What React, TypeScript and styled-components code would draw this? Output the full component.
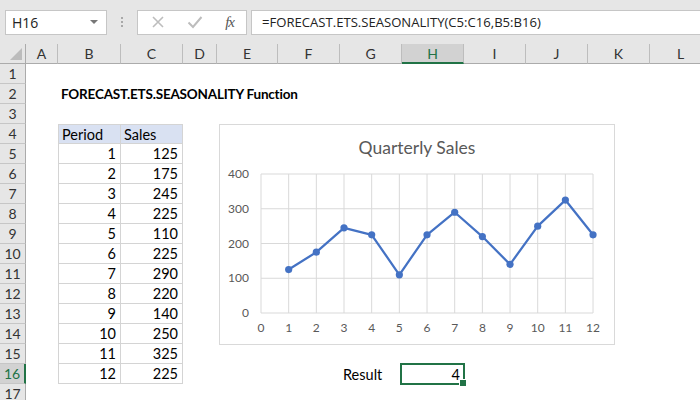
import React from 'react';
import styled, { createGlobalStyle } from 'styled-components';

const GlobalStyle = createGlobalStyle`
  html, body {
    margin: 0;
    padding: 0;
    background: #ffffff;
  }
  * {
    box-sizing: border-box;
  }
`;

const GREEN = '#217346';
const UI_FONT = `'Open Sans', 'Noto Sans', sans-serif`;
const CELL_FONT = `Lato, 'Liberation Sans', sans-serif`;

const COLUMNS: { key: string; width: number }[] = [
  { key: 'A', width: 32 },
  { key: 'B', width: 63 },
  { key: 'C', width: 62 },
  { key: 'D', width: 34 },
  { key: 'E', width: 61 },
  { key: 'F', width: 62 },
  { key: 'G', width: 62 },
  { key: 'H', width: 62 },
  { key: 'I', width: 62 },
  { key: 'J', width: 62 },
  { key: 'K', width: 62 },
  { key: 'L', width: 62 },
];

const ROW_COUNT = 17;
const SELECTED_COL = 'H';
const SELECTED_ROW = 16;

const SALES = [125, 175, 245, 225, 110, 225, 290, 220, 140, 250, 325, 225];

type CellDef = {
  value: string;
  align?: 'left' | 'right';
  bold?: boolean;
  header?: boolean;
  table?: boolean;
};

const buildCells = () => {
  const cells: Record<string, CellDef> = {
    B2: { value: 'FORECAST.ETS.SEASONALITY Function', bold: true },
    B4: { value: 'Period', header: true, table: true },
    C4: { value: 'Sales', header: true, table: true },
    G16: { value: 'Result' },
    H16: { value: '4', align: 'right' },
  };
  SALES.forEach((s, i) => {
    cells[`B${i + 5}`] = { value: String(i + 1), align: 'right', table: true };
    cells[`C${i + 5}`] = { value: String(s), align: 'right', table: true };
  });
  return cells;
};

const CELLS = buildCells();

const Window = styled.div`
  width: 700px;
  height: 400px;
  overflow: hidden;
  background: #ffffff;
  display: flex;
  flex-direction: column;
`;

const FormulaBar = styled.div`
  height: 44px;
  flex: none;
  display: flex;
  align-items: center;
  padding-left: 5px;
  background: #e6e6e6;
`;

const NameBox = styled.div`
  width: 102px;
  height: 25px;
  background: #ffffff;
  border: 1px solid #c6c6c6;
  display: flex;
  align-items: center;
  justify-content: space-between;
  padding: 0 8px 0 6px;
  font-family: ${UI_FONT};
  font-size: 14px;
  color: #222;
`;

const DropArrow = styled.span`
  width: 0;
  height: 0;
  border-left: 4px solid transparent;
  border-right: 4px solid transparent;
  border-top: 4px solid #777;
`;

const Grip = styled.div`
  width: 30px;
  display: flex;
  flex-direction: column;
  align-items: center;
  gap: 2px;
`;

const GripDot = styled.span`
  width: 2px;
  height: 2px;
  background: #a8a8a8;
`;

const IconBox = styled.div`
  width: 110px;
  height: 25px;
  background: #ffffff;
  border: 1px solid #c6c6c6;
  display: flex;
  align-items: center;
  justify-content: space-between;
  padding: 0 12px 0 13px;
`;

const FxLabel = styled.span`
  font-family: 'Liberation Serif', serif;
  font-style: italic;
  font-size: 15px;
  color: #555;
  letter-spacing: -1px;
`;

const FormulaInput = styled.div`
  flex: 1;
  height: 25px;
  margin-left: 4px;
  background: #ffffff;
  border: 1px solid #c6c6c6;
  border-right: none;
  display: flex;
  align-items: center;
  padding-left: 10px;
  font-family: ${UI_FONT};
  font-size: 13.1px;
  color: #222;
  white-space: nowrap;
`;

const SheetArea = styled.div`
  position: relative;
  flex: 1;
  overflow: hidden;
`;

const Grid = styled.div`
  display: grid;
  grid-template-columns: 26px ${COLUMNS.map((c) => `${c.width}px`).join(' ')};
  grid-auto-rows: 20px;
`;

const Corner = styled.div`
  background: #e6e6e6;
  border-right: 1px solid #ababab;
  border-bottom: 1px solid #ababab;
  display: flex;
  align-items: flex-end;
  justify-content: flex-end;
  padding: 0 3px 3px 0;
`;

const ColHeader = styled.div<{ $selected: boolean }>`
  background: ${(p) => (p.$selected ? '#d2d2d2' : '#e6e6e6')};
  border-right: 1px solid #bdbdbd;
  border-bottom: ${(p) => (p.$selected ? `2px solid ${GREEN}` : '1px solid #ababab')};
  display: flex;
  align-items: center;
  justify-content: center;
  font-family: ${CELL_FONT};
  font-size: 14px;
  color: ${(p) => (p.$selected ? GREEN : '#333')};
  padding-top: ${(p) => (p.$selected ? '1px' : '0')};
`;

const RowHeader = styled.div<{ $selected: boolean }>`
  background: ${(p) => (p.$selected ? '#d2d2d2' : '#e6e6e6')};
  border-right: ${(p) => (p.$selected ? `2px solid ${GREEN}` : '1px solid #ababab')};
  border-bottom: 1px solid #c6c6c6;
  display: flex;
  align-items: center;
  justify-content: center;
  font-family: ${CELL_FONT};
  font-size: 14px;
  color: ${(p) => (p.$selected ? GREEN : '#333')};
`;

const Cell = styled.div<{
  $align: 'left' | 'right';
  $bold: boolean;
  $header: boolean;
  $table: boolean;
  $firstCol: boolean;
  $firstRow: boolean;
  $selected: boolean;
}>`
  position: relative;
  display: flex;
  align-items: center;
  justify-content: ${(p) => (p.$align === 'right' ? 'flex-end' : 'flex-start')};
  padding: 0 4px 0 3px;
  white-space: nowrap;
  overflow: visible;
  font-family: ${CELL_FONT};
  font-size: ${(p) => (p.$bold ? '13.5px' : '14.5px')};
  letter-spacing: ${(p) => (p.$bold ? '-0.2px' : '0')};
  font-weight: ${(p) => (p.$bold ? 700 : 400)};
  color: #000;
  background: ${(p) => (p.$header ? '#d9e1f2' : 'transparent')};
  border-right: ${(p) => (p.$table ? '1px solid #d4d4d4' : 'none')};
  border-bottom: ${(p) => (p.$table ? '1px solid #d4d4d4' : 'none')};
  border-left: ${(p) => (p.$table && p.$firstCol ? '1px solid #d4d4d4' : 'none')};
  border-top: ${(p) => (p.$table && p.$firstRow ? '1px solid #d4d4d4' : 'none')};

  ${(p) =>
    p.$selected &&
    `
    &::before {
      content: '';
      position: absolute;
      left: -2px;
      top: -1px;
      right: -1px;
      bottom: -1px;
      border: 2px solid ${GREEN};
    }
    &::after {
      content: '';
      position: absolute;
      right: -3px;
      bottom: -3px;
      width: 6px;
      height: 6px;
      background: ${GREEN};
      border: 1px solid #ffffff;
    }
  `}
`;

const ChartBox = styled.div`
  position: absolute;
  left: 219px;
  top: 80px;
  width: 396px;
  height: 221px;
  background: #ffffff;
  border: 1px solid #d9d9d9;
  display: flex;
  flex-direction: column;
`;

const ChartTitle = styled.div`
  height: 43px;
  display: flex;
  align-items: center;
  justify-content: center;
  padding-top: 2px;
  font-family: ${CELL_FONT};
  font-size: 17.5px;
  color: #595959;
`;

const AxisText = styled.text`
  font-family: ${CELL_FONT};
  font-size: 12px;
  fill: #595959;
`;

const CornerTriangle = () => (
  <svg width="12" height="12" viewBox="0 0 12 12">
    <polygon points="12,0 12,12 0,12" fill="#bcbcbc" />
  </svg>
);

const CrossIcon = () => (
  <svg width="14" height="14" viewBox="0 0 14 14">
    <path d="M2 2 L12 12 M12 2 L2 12" stroke="#bdbdbd" strokeWidth="1.6" fill="none" />
  </svg>
);

const CheckIcon = () => (
  <svg width="16" height="14" viewBox="0 0 16 14">
    <path d="M1.5 7.5 L6 12 L14.5 2" stroke="#bdbdbd" strokeWidth="2" fill="none" />
  </svg>
);

// plot geometry (svg coordinates, below the title)
const X0 = 41;
const X_STEP = 27.67;
const Y0 = 145;
const Y_PER = 0.3475;

const px = (i: number) => X0 + i * X_STEP;
const py = (v: number) => Y0 - v * Y_PER;

const SalesChart = () => {
  const points = SALES.map((v, i) => `${px(i + 1)},${py(v)}`).join(' ');
  return (
    <ChartBox>
      <ChartTitle>Quarterly Sales</ChartTitle>
      <svg width="394" height="176">
        {Array.from({ length: 13 }, (_, i) => (
          <line key={`v${i}`} x1={px(i)} x2={px(i)} y1={py(400)} y2={py(0)} stroke="#d9d9d9" strokeWidth="1" />
        ))}
        {[0, 100, 200, 300, 400].map((v) => (
          <line key={`h${v}`} x1={px(0)} x2={px(12)} y1={py(v)} y2={py(v)} stroke="#d9d9d9" strokeWidth="1" />
        ))}
        {[0, 100, 200, 300, 400].map((v) => (
          <AxisText key={`yl${v}`} x={29} y={py(v) + 4} textAnchor="end">
            {v}
          </AxisText>
        ))}
        {Array.from({ length: 13 }, (_, i) => (
          <AxisText key={`xl${i}`} x={px(i)} y={164} textAnchor="middle">
            {i}
          </AxisText>
        ))}
        <polyline points={points} fill="none" stroke="#4472c4" strokeWidth="2.25" strokeLinejoin="round" />
        {SALES.map((v, i) => (
          <circle key={`p${i}`} cx={px(i + 1)} cy={py(v)} r="3.6" fill="#4472c4" />
        ))}
      </svg>
    </ChartBox>
  );
};

export default function App() {
  return (
    <>
      <GlobalStyle />
      <Window>
        <FormulaBar>
          <NameBox>
            <span>H16</span>
            <DropArrow />
          </NameBox>
          <Grip>
            <GripDot />
            <GripDot />
            <GripDot />
          </Grip>
          <IconBox>
            <CrossIcon />
            <CheckIcon />
            <FxLabel>fx</FxLabel>
          </IconBox>
          <FormulaInput>=FORECAST.ETS.SEASONALITY(C5:C16,B5:B16)</FormulaInput>
        </FormulaBar>
        <SheetArea>
          <Grid>
            <Corner>
              <CornerTriangle />
            </Corner>
            {COLUMNS.map((c) => (
              <ColHeader key={c.key} $selected={c.key === SELECTED_COL}>
                {c.key}
              </ColHeader>
            ))}
            {Array.from({ length: ROW_COUNT }, (_, r) => {
              const row = r + 1;
              return (
                <React.Fragment key={row}>
                  <RowHeader $selected={row === SELECTED_ROW}>{row}</RowHeader>
                  {COLUMNS.map((c) => {
                    const id = `${c.key}${row}`;
                    const def = CELLS[id];
                    return (
                      <Cell
                        key={id}
                        $align={def?.align ?? 'left'}
                        $bold={!!def?.bold}
                        $header={!!def?.header}
                        $table={!!def?.table}
                        $firstCol={c.key === 'B'}
                        $firstRow={row === 4}
                        $selected={c.key === SELECTED_COL && row === SELECTED_ROW}
                      >
                        {def?.value}
                      </Cell>
                    );
                  })}
                </React.Fragment>
              );
            })}
          </Grid>
          <SalesChart />
        </SheetArea>
      </Window>
    </>
  );
}
